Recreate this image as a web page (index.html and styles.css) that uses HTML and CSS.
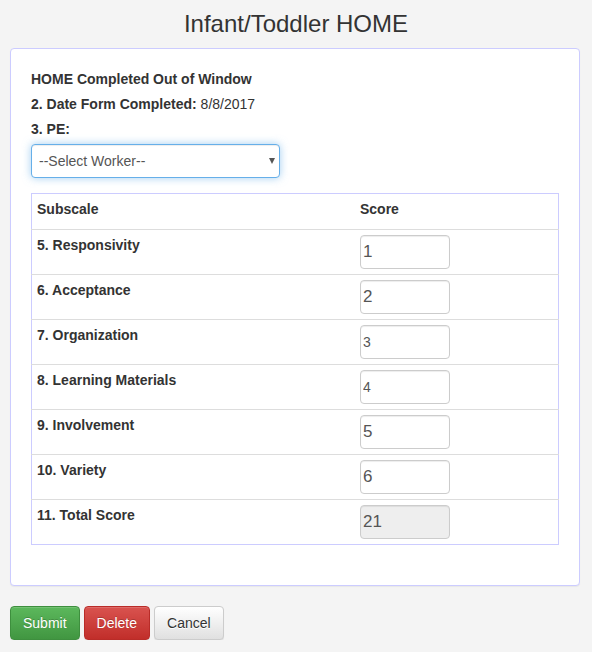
FILE: index.html
```html
<!DOCTYPE html>
<html>
<head>
<meta charset="utf-8">
<link rel="stylesheet" href="styles.css">
</head>
<body>
<h1 class="title">Infant/Toddler HOME</h1>
<div class="panel">
  <div class="line"><b>HOME Completed Out of Window</b></div>
  <div class="line"><b>2. Date Form Completed:</b> 8/8/2017</div>
  <div class="line"><b>3. PE:</b></div>
  <div class="select-wrap">
    <select class="select"><option>--Select Worker--</option></select>
    <span class="caret"></span>
  </div>
  <table class="scores">
    <thead>
      <tr><th class="col1">Subscale</th><th>Score</th></tr>
    </thead>
    <tbody>
      <tr><td class="label">5. Responsivity</td><td><input class="score" value="1"></td></tr>
      <tr><td class="label">6. Acceptance</td><td><input class="score" value="2"></td></tr>
      <tr><td class="label">7. Organization</td><td><input class="score small" value="3"></td></tr>
      <tr><td class="label">8. Learning Materials</td><td><input class="score small" value="4"></td></tr>
      <tr><td class="label">9. Involvement</td><td><input class="score" value="5"></td></tr>
      <tr><td class="label">10. Variety</td><td><input class="score" value="6"></td></tr>
      <tr><td class="label">11. Total Score</td><td><input class="score" value="21" disabled></td></tr>
    </tbody>
  </table>
</div>
<div class="actions">
  <button class="btn btn-success">Submit</button>
  <button class="btn btn-danger">Delete</button>
  <button class="btn btn-default">Cancel</button>
</div>
</body>
</html>
```
FILE: styles.css
```css
html, body {
  margin: 0;
  padding: 0;
  background: #f4f4f4;
  font-family: "Liberation Sans", Arial, sans-serif;
  font-size: 14px;
  line-height: 20px;
  color: #333;
}
.title {
  margin: 9px 0 9px;
  font-size: 24px;
  line-height: 30px;
  font-weight: normal;
  text-align: center;
  color: #333;
}
.panel {
  margin: 0 12px 0 10px;
  background: #fff;
  border: 1px solid #ccccff;
  border-radius: 4px;
  padding: 20px 20px 40px;
  box-shadow: 0 1px 1px rgba(0,0,0,0.05);
}
.line {
  height: 20px;
  margin-bottom: 5px;
}
.line b { font-weight: bold; }
.select-wrap {
  position: relative;
  width: 249px;
  margin-top: 2px;
}
.select {
  -webkit-appearance: none;
  appearance: none;
  display: block;
  width: 249px;
  height: 34px;
  padding: 6px 7px;
  font-family: "Liberation Sans", Arial, sans-serif;
  font-size: 14px;
  color: #555;
  background: #fff;
  border: 1px solid #66afe9;
  border-radius: 4px;
  outline: 0;
  box-shadow: inset 0 1px 1px rgba(0,0,0,.075), 0 0 8px rgba(102,175,233,.6);
}
.caret {
  position: absolute;
  right: 5px;
  top: 14px;
  width: 0;
  height: 0;
  border-left: 3.5px solid transparent;
  border-right: 3.5px solid transparent;
  border-top: 6px solid #555;
}
.scores {
  margin-top: 15px;
  width: 528px;
  border-collapse: collapse;
  border: 1px solid #ccccff;
}
.scores th {
  text-align: left;
  font-weight: bold;
  padding: 5px 5px 10px;
  vertical-align: top;
  border-bottom: 1px solid #ddd;
}
.scores th.col1 { width: 313px; }
.scores td {
  padding: 5px;
  vertical-align: top;
  border-top: 1px solid #ddd;
}
.scores td.label { font-weight: bold; }
.score {
  display: block;
  box-sizing: border-box;
  width: 90px;
  height: 34px;
  padding: 1px 2px;
  font-family: "Liberation Sans", Arial, sans-serif;
  font-size: 17px;
  color: #555;
  background: #fff;
  border: 1px solid #ccc;
  border-radius: 4px;
  box-shadow: inset 0 1px 1px rgba(0,0,0,.075);
  outline: 0;
}
.score.small { font-size: 14px; }
.score:disabled { background: #eee; }
.actions {
  display: flex;
  gap: 4px;
  margin: 20px 0 0 10px;
}
.btn {
  font-family: "Liberation Sans", Arial, sans-serif;
  font-size: 14px;
  line-height: 20px;
  padding: 6px 12px;
  border-radius: 4px;
  border: 1px solid transparent;
  box-shadow: inset 0 1px 0 rgba(255,255,255,.15), 0 1px 1px rgba(0,0,0,.075);
}
.btn-success {
  color: #fff;
  text-shadow: 0 -1px 0 rgba(0,0,0,.2);
  background-image: linear-gradient(to bottom, #5cb85c 0, #419641 100%);
  border-color: #3e8f3e;
}
.btn-danger {
  color: #fff;
  text-shadow: 0 -1px 0 rgba(0,0,0,.2);
  background-image: linear-gradient(to bottom, #d9534f 0, #c12e2a 100%);
  border-color: #b92c28;
}
.btn-default {
  color: #333;
  text-shadow: 0 1px 0 #fff;
  background-image: linear-gradient(to bottom, #fff 0, #e0e0e0 100%);
  border-color: #ccc;
}
```
